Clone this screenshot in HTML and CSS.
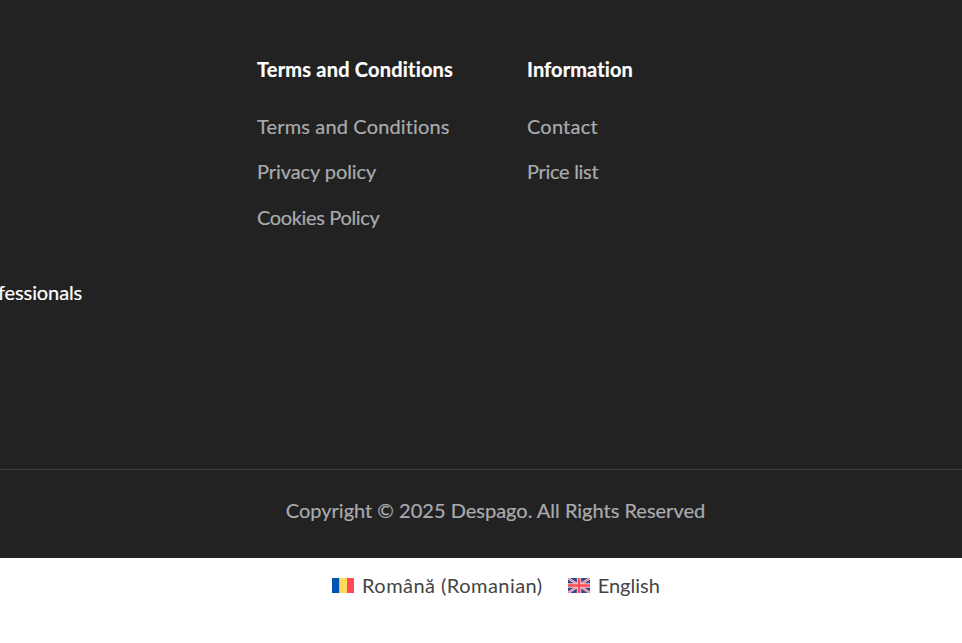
FILE: index.html
```html
<!DOCTYPE html>
<html lang="en">
<head>
    <meta charset="UTF-8">
    <link rel="stylesheet" href="styles.css">
    <title>Despago</title>
</head>
<body>
    <footer class="footer">
        <div class="footer-columns">
            <div class="about">
                <p class="about-text">fessionals</p>
            </div>

            <div class="column">
                <h4 class="column-title title-terms">Terms and Conditions</h4>
                <ul class="links">
                    <li><a href="#" class="link-terms">Terms and Conditions</a></li>
                    <li><a href="#" class="link-privacy">Privacy policy</a></li>
                    <li><a href="#" class="link-cookies">Cookies Policy</a></li>
                </ul>
            </div>

            <div class="column">
                <h4 class="column-title title-info">Information</h4>
                <ul class="links">
                    <li><a href="#" class="link-contact">Contact</a></li>
                    <li><a href="#" class="link-price">Price list</a></li>
                </ul>
            </div>
        </div>

        <!-- COPYRIGHT BAR -->
        <div class="copyright">
            <span class="copyright-text">Copyright © 2025 Despago. All Rights Reserved</span>
        </div>
    </footer>

    <!-- LANGUAGE SWITCHER -->
    <div class="languages">
        <a href="#" class="language">
            <svg class="flag" viewBox="0 0 22 15">
                <rect width="7.5" height="15" fill="#0052b4"/>
                <rect x="7.5" width="7.5" height="15" fill="#ffda5a"/>
                <rect x="15" width="7" height="15" fill="#ff4b55"/>
            </svg>
            <span class="name-romanian">Română (Romanian)</span>
        </a>
        <a href="#" class="language">
            <svg class="flag" viewBox="0 0 22 15">
                <rect width="22" height="15" fill="#2b4a94"/>
                <path d="M0 0L22 15M22 0L0 15" stroke="#f0d5e0" stroke-width="2.4"/>
                <path d="M0 0L22 15M22 0L0 15" stroke="#f4626e" stroke-width="1"/>
                <path d="M11 0V15M0 7.5H22" stroke="#f9c5ce" stroke-width="4.4"/>
                <path d="M11 0V15M0 7.5H22" stroke="#ff4b55" stroke-width="2.4"/>
            </svg>
            <span>English</span>
        </a>
    </div>
</body>
</html>
```
FILE: styles.css
```css
body{
    margin: 0;
    font-family: Lato, "Liberation Sans", sans-serif;
    font-size: 20px;
    line-height: 30px;
    font-variant-ligatures: none;
    background-color: #fff;
    overflow: hidden;
}
a{
    color: inherit;
    text-decoration: none;
}
.footer{
    background-color: #222;
    color: #a9abae;
    -webkit-text-stroke: 0.2px;
}
.footer-columns{
    display: grid;
    grid-template-columns: 257px 270px 1fr;
    height: 415px;
    padding-top: 54px;
}
.about-text{
    margin: 223px 0 0 -2px;
    color: #fff;
    letter-spacing: -0.1px;
}
.column-title{
    margin: 0 0 27px;
    font-size: 20px;
    font-weight: 700;
    color: #fff;
}
.title-terms{
    letter-spacing: 0.2px;
}
.title-info{
    letter-spacing: 0.1px;
}
.links{
    list-style: none;
    margin: 0;
    padding: 0;
}
.links li{
    margin-bottom: 15.4px;
}
.link-terms{
    letter-spacing: 0.15px;
}
.link-privacy{
    letter-spacing: -0.08px;
}
.link-cookies{
    letter-spacing: -0.35px;
}
.link-contact{
    letter-spacing: 0.2px;
}
.link-price{
    letter-spacing: -0.3px;
}
.copyright{
    border-top: 1px solid #3d3d3d;
    height: 88px;
    text-align: center;
}
.copyright-text{
    display: inline-block;
    margin: 25px 0 0 29px;
}
.languages{
    display: flex;
    padding: 12px 0 0 332px;
    gap: 25px;
    color: #444;
}
.language{
    display: flex;
    align-items: center;
    gap: 8px;
}
.flag{
    width: 22px;
    height: 15px;
}
.name-romanian{
    letter-spacing: 0.46px;
}
```
